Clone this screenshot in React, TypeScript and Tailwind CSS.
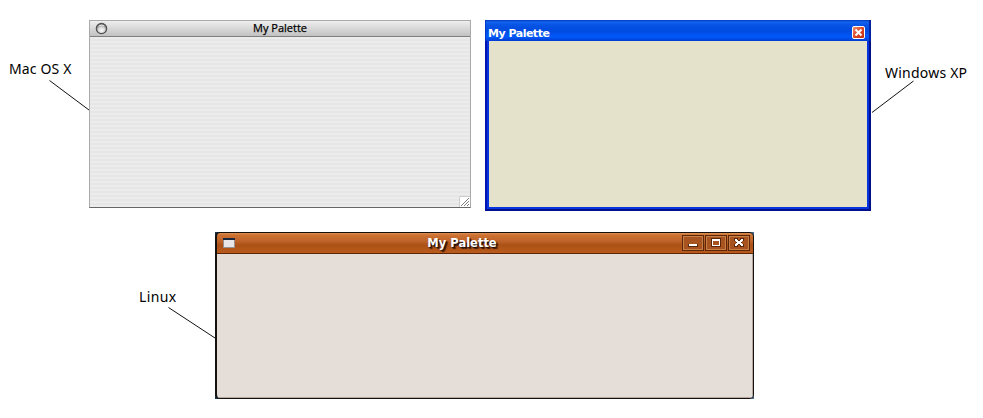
import React from "react";

const labelClass =
  "h-5 whitespace-nowrap font-['Noto_Sans',sans-serif] text-[14px] leading-5 text-black";

function MacPalette() {
  return (
    <section className="flex h-[188px] w-[382px] flex-col border border-[#aaa] border-b-[#666]">
      <header className="grid h-4 shrink-0 grid-cols-[24px_1fr_24px] items-start border-b border-[#7e7e7e] bg-gradient-to-b from-[#eee] to-[#c2c2c2]">
        <svg className="ml-[5px] mt-px h-[13px] w-[13px]" viewBox="0 0 13 13">
          <defs>
            <radialGradient id="macButton" cx="50%" cy="68%" r="60%">
              <stop offset="0" stopColor="#fff" />
              <stop offset=".55" stopColor="#d2d2d2" />
              <stop offset="1" stopColor="#6d6d6d" />
            </radialGradient>
          </defs>
          <circle cx="6.5" cy="6.5" r="5.2" fill="url(#macButton)" stroke="#505050" strokeWidth="1.2" />
          <path d="M3.8 4Q6.5 2 9.2 4" fill="none" stroke="#eee" />
        </svg>
        <h2 className="-mt-px text-center font-['Open_Sans',sans-serif] text-[11px] font-medium leading-4 text-black [-webkit-text-stroke:0.25px_#000]">
          My Palette
        </h2>
      </header>
      <div className="flex flex-1 items-end justify-end bg-[repeating-linear-gradient(to_bottom,#ececec_0px,#ececec_2px,#e6e6e6_2px,#e6e6e6_4px)]">
        <svg className="h-[11px] w-[11px]" viewBox="0 0 11 11">
          <path d="M0 0H11V11H0Z" fill="#fff" />
          <path d="M.5 11V.5H11" fill="none" stroke="#ccc" />
          <path d="M2 10L10 2M5 10L10 5M8 10L10 8" stroke="#808080" />
        </svg>
      </div>
    </section>
  );
}

function XpPalette() {
  return (
    <section className="flex h-[191px] w-[386px] flex-col bg-[#0019bd]">
      <header className="flex h-[21px] shrink-0 items-start justify-between border-l border-r-2 border-l-[#0038c8] border-r-[#0024a4] bg-[linear-gradient(to_bottom,#0037b8_0px,#1463ee_2px,#0754e4_5px,#004be0_11px,#0059fa_17px,#003bd0_21px)] pl-[2px] pr-[4px] pt-[5px]">
        <h2 className="mt-px font-['DejaVu_Sans',sans-serif] text-[11px] font-bold leading-[15px] tracking-[-0.5px] text-white">
          My Palette
        </h2>
        <svg className="mt-px h-[13px] w-[13px]" viewBox="0 0 13 13">
          <defs>
            <linearGradient id="xpClose" x1="0" y1="0" x2="1" y2="1">
              <stop stopColor="#ee957c" />
              <stop offset=".5" stopColor="#dc4724" />
              <stop offset="1" stopColor="#b92b0d" />
            </linearGradient>
          </defs>
          <rect x=".5" y=".5" width="12" height="12" rx="1.5" fill="url(#xpClose)" stroke="#fff" />
          <path d="M3.5 3.5L9.5 9.5M9.5 3.5L3.5 9.5" stroke="#fff" strokeWidth="2" />
        </svg>
      </header>
      <div className="flex flex-1 border-x-[2px] border-b-2 border-l-[#0014b0] border-r-[#00108c] border-b-[#000f90]">
        <div className="flex flex-1 border-b-2 border-l-2 border-r-2 border-[#0634dc]">
          <div className="flex-1 bg-[#e4e2cb]" />
        </div>
      </div>
    </section>
  );
}

function LinuxButton({ children }: { children: React.ReactNode }) {
  return (
    <svg className="h-4 w-[22px]" viewBox="0 0 22 16" shapeRendering="crispEdges">
      <rect x=".5" y=".5" width="21" height="15" rx="1" fill="#a85420" stroke="#5b2708" />
      <rect x="1.5" y="1.5" width="19" height="13" fill="none" stroke="#c98048" />
      {children}
    </svg>
  );
}

function LinuxPalette() {
  return (
    <section className="h-[167px] w-[539px] bg-[linear-gradient(to_right,#1c3048_50%,#4b6680_50%)]">
      <div className="flex h-[167px] flex-col overflow-hidden rounded-[5px] border border-l-2 border-[#15110f]">
        <header className="grid h-[21px] shrink-0 grid-cols-[28px_1fr_75px] items-center border-b border-[#5c2507] bg-[linear-gradient(to_bottom,#e09052_0px,#cd7232_2px,#bf642a_8px,#ac5116_12px,#b95b1d_20px)]">
          <svg className="ml-[6px] h-[10px] w-[12px]" viewBox="0 0 12 10" shapeRendering="crispEdges">
            <path d="M0 0H12V10H0Z" fill="#979090" />
            <path d="M1 2H11V9H1Z" fill="#e9e7e7" />
            <path d="M0 0H12V2H0Z" fill="#19283e" />
          </svg>
          <h2 className="pl-px text-center font-['DejaVu_Sans',sans-serif] text-[11.5px] font-bold leading-4 text-white [text-shadow:1px_1px_1px_#1d1009,2px_2px_1px_#421a08]">
            My Palette
          </h2>
          <div className="flex gap-px pl-[4px]">
            <LinuxButton>
              <path d="M6 9H16V12H6Z" fill="#5b2708" />
              <path d="M7 9H15V11H7Z" fill="#fff" />
            </LinuxButton>
            <LinuxButton>
              <path d="M6 3H16V12H6Z" fill="#5b2708" />
              <path d="M7 4H15V11H7ZM8 6V10H14V6Z" fill="#fff" fillRule="evenodd" />
              <path d="M8 6H14V10H8Z" fill="#a85420" />
            </LinuxButton>
            <LinuxButton>
              <path d="M6 3H10V5H12V3H16V6H14V9H16V12H12V10H10V12H6V9H8V6H6Z" fill="#5b2708" />
              <path d="M7 4H9V5H10V6H12V5H13V4H15V6H14V7H13V8H14V9H15V11H13V10H12V9H10V10H9V11H7V9H8V8H9V7H8V6H7Z" fill="#fff" />
            </LinuxButton>
          </div>
        </header>
        <div className="flex-1 border-b border-r border-[#b7a79d] bg-[#e5ddd7]" />
      </div>
    </section>
  );
}

export default function App() {
  return (
    <main className="h-[418px] w-[983px] overflow-hidden bg-white pt-5">
      <div className="flex h-[212px] items-start">
        <div className="w-[89px] pt-[39px]">
          <p className={labelClass + " pl-[9px] tracking-[0.15px]"}>Mac OS X</p>
          <svg className="block h-8 w-[89px]" viewBox="0 0 89 32">
            <path d="M49.5 1.5L89 31" stroke="#111" />
          </svg>
        </div>
        <MacPalette />
        <div className="w-[14px]" />
        <XpPalette />
        <div className="w-[112px] pt-[43px]">
          <p className={labelClass + " pl-[14px] tracking-[0.22px]"}>Windows XP</p>
          <svg className="-mt-1 block h-[34px] w-[112px]" viewBox="0 0 112 34">
            <path d="M42.5 2L1 33.5" stroke="#111" />
          </svg>
        </div>
      </div>
      <div className="flex items-start">
        <div className="w-[215px] pt-[55px]">
          <p className={labelClass + " pl-[139px] tracking-[0.35px]"}>Linux</p>
          <svg className="block h-8 w-[215px]" viewBox="0 0 215 32">
            <path d="M168.5 .5L215 31" stroke="#111" />
          </svg>
        </div>
        <LinuxPalette />
      </div>
    </main>
  );
}
